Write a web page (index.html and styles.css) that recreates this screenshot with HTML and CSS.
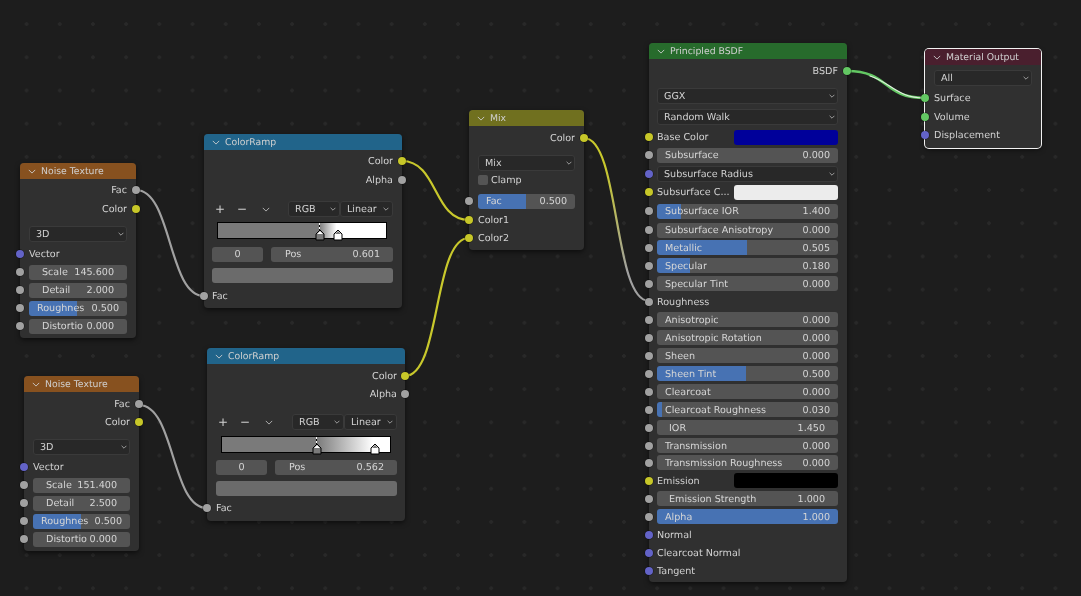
FILE: index.html
```html
<!DOCTYPE html>
<html lang="en">
<head>
<meta charset="utf-8">
<title>Shader nodes</title>
<link rel="stylesheet" href="styles.css">
</head>
<body>
<svg width="0" height="0" class="defs">
  <symbol id="chev" viewBox="0 0 10 6"><path d="M1 1l4 4 4-4" fill="none" stroke="currentColor" stroke-width="1.1"/></symbol>
</svg>
<main class="canvas">
  <svg class="wires" width="1081" height="596" viewBox="0 0 1081 596">
    <defs>
      <linearGradient id="yg" gradientUnits="userSpaceOnUse" x1="584" y1="138" x2="649" y2="301">
        <stop offset="0.2" stop-color="#c8c82c"/><stop offset="0.8" stop-color="#a1a1a1"/>
      </linearGradient>
    </defs>
    <path class="w w-gray" d="M136 190C172 190 168 296 204 296"/>
    <path class="w w-gray" d="M139 405C175 405 171 508 207 508"/>
    <path class="w w-yellow" d="M402 161C438 161 433 220 469 220"/>
    <path class="w w-yellow" d="M405 376C441 376 433 238 469 238"/>
    <path class="w w-mix" d="M584 138C620 138 613 301 649 301"/>
    <path class="w w-green" d="M847 71C890 71 882 98 925 98"/>
    <path class="w w-core" d="M870 76C890 82 897 98 925 98"/>
  </svg>

  <section class="node noise n1">
    <header class="head h-tex"><svg class="chev"><use href="#chev"/></svg><span>Noise Texture</span></header>
    <div class="row out first2"><span>Fac</span><i class="sock gray"></i></div>
    <div class="row out sp-1"><span>Color</span><i class="sock yellow"></i></div>
    <div class="row sp-7"><div class="drop"><span>3D</span><svg class="chev-s"><use href="#chev"/></svg></div></div>
    <div class="row sp-2"><i class="sock blue"></i><span>Vector</span></div>
    <div class="row"><i class="sock gray"></i><div class="field wide"><span>Scale</span><span>145.600</span></div></div>
    <div class="row"><i class="sock gray"></i><div class="field wide"><span>Detail</span><span>2.000</span></div></div>
    <div class="row"><i class="sock gray"></i><div class="field fill" style="--v:49%"><span>Roughnes</span><span>0.500</span></div></div>
    <div class="row"><i class="sock gray"></i><div class="field wide"><span>Distortio</span><span>0.000</span></div></div>
  </section>

  <section class="node noise n2">
    <header class="head h-tex"><svg class="chev"><use href="#chev"/></svg><span>Noise Texture</span></header>
    <div class="row out first"><span>Fac</span><i class="sock gray"></i></div>
    <div class="row out"><span>Color</span><i class="sock yellow"></i></div>
    <div class="row sp-7"><div class="drop"><span>3D</span><svg class="chev-s"><use href="#chev"/></svg></div></div>
    <div class="row sp-2"><i class="sock blue"></i><span>Vector</span></div>
    <div class="row"><i class="sock gray"></i><div class="field wide"><span>Scale</span><span>151.400</span></div></div>
    <div class="row"><i class="sock gray"></i><div class="field wide"><span>Detail</span><span>2.500</span></div></div>
    <div class="row"><i class="sock gray"></i><div class="field fill" style="--v:49%"><span>Roughnes</span><span>0.500</span></div></div>
    <div class="row"><i class="sock gray"></i><div class="field wide"><span>Distortio</span><span>0.000</span></div></div>
  </section>

  <section class="node ramp r1">
    <header class="head h-ramp"><svg class="chev"><use href="#chev"/></svg><span>ColorRamp</span></header>
    <div class="row out first2"><span>Color</span><i class="sock yellow"></i></div>
    <div class="row out sp-1"><span>Alpha</span><i class="sock gray"></i></div>
    <div class="row tools">
      <span class="tool">+</span><span class="tool">−</span><svg class="chev-t"><use href="#chev"/></svg>
      <div class="seg"><div class="drop"><span>RGB</span><svg class="chev-s"><use href="#chev"/></svg></div><div class="drop"><span>Linear</span><svg class="chev-s"><use href="#chev"/></svg></div></div>
    </div>
    <div class="rampbar g1">
      <i class="tick t1"></i>
      <svg class="stop s1" viewBox="0 0 10 12"><path d="M1 5l4-4 4 4v6H1z" fill="#7a7a7a" stroke="#000"/><path d="M2 5l3-3 3 3z" fill="#fff"/></svg>
      <svg class="stop s2" viewBox="0 0 10 12"><path d="M1 5l4-4 4 4v6H1z" fill="#fff" stroke="#000"/><path d="M2 5l3-3 3 3z" fill="#7a7a7a"/></svg>
    </div>
    <div class="row pos"><div class="field idx"><span>0</span></div><div class="field wide2"><span>Pos</span><span>0.601</span></div></div>
    <div class="row swatchrow"><div class="swatch"></div></div>
    <div class="row fac"><i class="sock gray"></i><span>Fac</span></div>
  </section>

  <section class="node ramp r2">
    <header class="head h-ramp"><svg class="chev"><use href="#chev"/></svg><span>ColorRamp</span></header>
    <div class="row out first"><span>Color</span><i class="sock yellow"></i></div>
    <div class="row out"><span>Alpha</span><i class="sock gray"></i></div>
    <div class="row tools">
      <span class="tool">+</span><span class="tool">−</span><svg class="chev-t"><use href="#chev"/></svg>
      <div class="seg"><div class="drop"><span>RGB</span><svg class="chev-s"><use href="#chev"/></svg></div><div class="drop"><span>Linear</span><svg class="chev-s"><use href="#chev"/></svg></div></div>
    </div>
    <div class="rampbar g2">
      <i class="tick t3"></i>
      <svg class="stop s3" viewBox="0 0 10 12"><path d="M1 5l4-4 4 4v6H1z" fill="#7a7a7a" stroke="#000"/><path d="M2 5l3-3 3 3z" fill="#fff"/></svg>
      <svg class="stop s4" viewBox="0 0 10 12"><path d="M1 5l4-4 4 4v6H1z" fill="#fff" stroke="#000"/><path d="M2 5l3-3 3 3z" fill="#7a7a7a"/></svg>
    </div>
    <div class="row pos"><div class="field idx"><span>0</span></div><div class="field wide2"><span>Pos</span><span>0.562</span></div></div>
    <div class="row swatchrow"><div class="swatch"></div></div>
    <div class="row fac"><i class="sock gray"></i><span>Fac</span></div>
  </section>

  <section class="node mix">
    <header class="head h-mix"><svg class="chev"><use href="#chev"/></svg><span>Mix</span></header>
    <div class="row out first"><span>Color</span><i class="sock yellow"></i></div>
    <div class="row sp-7"><div class="drop"><span>Mix</span><svg class="chev-s"><use href="#chev"/></svg></div></div>
    <div class="row up-1"><i class="check"></i><span>Clamp</span></div>
    <div class="row sp-3"><i class="sock gray"></i><div class="field fill" style="--v:49%"><span>Fac</span><span>0.500</span></div></div>
    <div class="row sp-1"><i class="sock yellow"></i><span>Color1</span></div>
    <div class="row"><i class="sock yellow"></i><span>Color2</span></div>
  </section>

  <section class="node bsdf">
    <header class="head h-bsdf"><svg class="chev"><use href="#chev"/></svg><span>Principled BSDF</span></header>
    <div class="row out first"><span>BSDF</span><i class="sock green"></i></div>
    <div class="row sp-7"><div class="drop"><span>GGX</span><svg class="chev-s"><use href="#chev"/></svg></div></div>
    <div class="row sp-3"><div class="drop"><span>Random Walk</span><svg class="chev-s"><use href="#chev"/></svg></div></div>
    <div class="row sp-2"><i class="sock yellow"></i><span class="lbl">Base Color</span><div class="color c-blue"></div></div>
    <div class="row"><i class="sock gray"></i><div class="field"><span>Subsurface</span><span>0.000</span></div></div>
    <div class="row sp-1"><i class="sock blue"></i><div class="drop"><span>Subsurface Radius</span><svg class="chev-s"><use href="#chev"/></svg></div></div>
    <div class="row"><i class="sock yellow"></i><span class="lbl">Subsurface C...</span><div class="color c-white"></div></div>
    <div class="row sp-1"><i class="sock gray"></i><div class="field fill" style="--v:13%"><span>Subsurface IOR</span><span>1.400</span></div></div>
    <div class="row sp-1"><i class="sock gray"></i><div class="field"><span>Subsurface Anisotropy</span><span>0.000</span></div></div>
    <div class="row up-h"><i class="sock gray"></i><div class="field fill" style="--v:50%"><span>Metallic</span><span>0.505</span></div></div>
    <div class="row"><i class="sock gray"></i><div class="field fill" style="--v:18%"><span>Specular</span><span>0.180</span></div></div>
    <div class="row"><i class="sock gray"></i><div class="field"><span>Specular Tint</span><span>0.000</span></div></div>
    <div class="row"><i class="sock gray"></i><span>Roughness</span></div>
    <div class="row"><i class="sock gray"></i><div class="field"><span>Anisotropic</span><span>0.000</span></div></div>
    <div class="row"><i class="sock gray"></i><div class="field"><span>Anisotropic Rotation</span><span>0.000</span></div></div>
    <div class="row"><i class="sock gray"></i><div class="field"><span>Sheen</span><span>0.000</span></div></div>
    <div class="row"><i class="sock gray"></i><div class="field fill" style="--v:49%"><span>Sheen Tint</span><span>0.500</span></div></div>
    <div class="row"><i class="sock gray"></i><div class="field"><span>Clearcoat</span><span>0.000</span></div></div>
    <div class="row"><i class="sock gray"></i><div class="field fill" style="--v:3%"><span>Clearcoat Roughness</span><span>0.030</span></div></div>
    <div class="row"><i class="sock gray"></i><div class="field inset"><span>IOR</span><span>1.450</span></div></div>
    <div class="row"><i class="sock gray"></i><div class="field"><span>Transmission</span><span>0.000</span></div></div>
    <div class="row up-1"><i class="sock gray"></i><div class="field"><span>Transmission Roughness</span><span>0.000</span></div></div>
    <div class="row"><i class="sock yellow"></i><span class="lbl">Emission</span><div class="color c-black"></div></div>
    <div class="row"><i class="sock gray"></i><div class="field inset"><span>Emission Strength</span><span>1.000</span></div></div>
    <div class="row"><i class="sock gray"></i><div class="field fill" style="--v:100%"><span>Alpha</span><span>1.000</span></div></div>
    <div class="row"><i class="sock blue"></i><span>Normal</span></div>
    <div class="row"><i class="sock blue"></i><span>Clearcoat Normal</span></div>
    <div class="row"><i class="sock blue"></i><span>Tangent</span></div>
  </section>

  <section class="node output">
    <header class="head h-out"><svg class="chev"><use href="#chev"/></svg><span>Material Output</span></header>
    <div class="row sp-4"><div class="drop"><span>All</span><svg class="chev-s"><use href="#chev"/></svg></div></div>
    <div class="row sp-2"><i class="sock green"></i><span>Surface</span></div>
    <div class="row sp-1"><i class="sock green"></i><span>Volume</span></div>
    <div class="row"><i class="sock blue"></i><span>Displacement</span></div>
  </section>
</main>
</body>
</html>
```
FILE: styles.css
```css
* { box-sizing: border-box; }
html, body { margin: 0; padding: 0; overflow: hidden; }
.defs { position: absolute; }
.canvas {
  position: relative;
  width: 1081px;
  height: 596px;
  overflow: hidden;
  background-color: #1d1d1d;
  background-image: radial-gradient(circle, #292929 0, #282828 1.6px, transparent 2.1px);
  background-size: 33.2px 33.2px;
  background-position: 10px 7.5px;
  font: 9.6px "DejaVu Sans", sans-serif;
  text-rendering: geometricPrecision;
  color: #d2d2d2;
  filter: blur(.3px);
}
.canvas span { padding-top: 1.6px; }
.wires { position: absolute; left: 0; top: 0; }
.w { fill: none; stroke-width: 2.2; stroke-linecap: round; }
.w-gray { stroke: #a1a1a1; }
.w-yellow { stroke: #c8c82c; }
.w-mix { stroke: url(#yg); }
.w-green { stroke: #63c763; stroke-width: 2.6; }
.w-core { stroke: #dfeedd; stroke-width: 1.2; }

.node {
  position: absolute;
  background: #303030;
  border-radius: 4px;
  box-shadow: 0 2px 5px rgba(0, 0, 0, .55);
  --px: 9px;
  --pr: 9px;
}
.n1 { left: 20px; top: 163px; width: 116px; height: 175px; }
.n2 { left: 24px; top: 376px; width: 115px; height: 175px; }
.r1 { left: 204px; top: 134px; width: 198px; height: 174px; --px: 8px; --pr: 9px; }
.r2 { left: 207px; top: 348px; width: 198px; height: 173px; --px: 9px; --pr: 8px; }
.mix { left: 469px; top: 110px; width: 115px; height: 140px; }
.bsdf { left: 649px; top: 43px; width: 198px; height: 539px; --px: 8px; --pr: 9px; }
.output { left: 925px; top: 49px; width: 116px; height: 99px; box-shadow: 0 0 0 1px #f2f2f2, 0 2px 5px rgba(0,0,0,.5); }

.head {
  display: flex;
  align-items: center;
  gap: 5px;
  height: 16px;
  padding-left: 8px;
  border-radius: 4px 4px 0 0;
  font-size: 9.3px;
  color: #d0d0d0;
}
.h-tex { background: #87511f; }
.h-ramp { background: #21648a; }
.h-mix { background: #70701f; }
.h-bsdf { background: #276b2c; }
.h-out { background: #4a1f2e; }
.chev { width: 8px; height: 5px; color: #d0d0d0; }
.chev-s { width: 6px; height: 4px; color: #d8d8d8; flex: none; }
.chev-t { width: 8px; height: 5px; color: #bdbdbd; margin-left: 3px; }

.row {
  position: relative;
  display: flex;
  align-items: center;
  height: 18px;
  padding: 0 var(--pr) 0 var(--px);
  white-space: nowrap;
}
.first { margin-top: 3px; }
.first2 { margin-top: 2px; }
.out { justify-content: flex-end; }
.sp-1 { margin-top: 1px; }
.sp-2 { margin-top: 2px; }
.sp-3 { margin-top: 3px; }
.sp-4 { margin-top: 4px; }
.sp-7 { margin-top: 7px; }
.up-1 { margin-top: -1px; }
.up-h { margin-top: -.5px; }

.sock {
  position: absolute;
  left: -4px;
  top: 5px;
  width: 8px;
  height: 8px;
  border-radius: 50%;
  box-shadow: 0 0 0 .5px rgba(0, 0, 0, .6);
}
.out .sock { left: auto; right: -4px; }
.gray { background: #a1a1a1; }
.yellow { background: #c7c729; }
.blue { background: #6363c7; }
.green { background: #63c763; }

.field {
  flex: 1;
  height: 15px;
  display: flex;
  align-items: center;
  justify-content: space-between;
  padding: 0 8px;
  border-radius: 3px;
  background: #545454;
  color: #d6d6d6;
  overflow: hidden;
}
.wide { padding: 0 13px; }
.inset { padding: 0 13px 0 12px; }
.fill { background: linear-gradient(90deg, #4772b3 var(--v), #545454 var(--v)); }
.drop {
  flex: 1;
  min-width: 0;
  height: 16px;
  display: flex;
  align-items: center;
  justify-content: space-between;
  padding: 0 2px 0 6px;
  background: #282828;
  border: 1px solid #3a3a3a;
  border-radius: 3px;
  color: #d2d2d2;
}
.lbl { width: 77px; overflow: hidden; }
.color { flex: 1; height: 15px; border-radius: 3px; }
.c-blue { background: #00009a; }
.c-white { background: #ececec; }
.c-black { background: #000; }
.check {
  width: 10px;
  height: 10px;
  margin-right: 3px;
  background: #545454;
  border-radius: 2px;
}

.tools { margin-top: 11px; padding-left: 11px; }
.r2 .tools { margin-top: 10px; }
.canvas .tool { width: 22px; padding-top: 0; font-size: 12px; line-height: 14px; color: #d0d0d0; }
.seg { display: flex; margin-left: auto; width: 105px; }
.seg .drop { flex: none; width: 52px; padding: 0 3px 0 6px; }
.seg .drop + .drop { width: 53px; }
.rampbar {
  position: relative;
  height: 17px;
  margin: 4px 15px 0 13px;
  border: 1px solid #000;
  border-bottom-width: 1.5px;
}
.r2 .rampbar { margin: 5px 14px 0 14px; }
.g1 { background: linear-gradient(90deg, #7a7a7a 60.1%, #fff 70.5%); }
.g2 { background: linear-gradient(90deg, #7a7a7a 56.2%, #fff 90%); }
.tick { position: absolute; top: 0; width: 1px; height: 8px; background: repeating-linear-gradient(#fff 0 2px, #000 2px 4px); }
.t1 { left: 101px; }
.t3 { left: 94px; }
.stop { position: absolute; top: 6px; width: 10px; height: 12px; }
.s1 { left: 97px; }
.s2 { left: 115px; }
.s3 { left: 90px; }
.s4 { left: 148px; }
.pos { margin-top: 6px; gap: 8px; }
.r2 .pos { margin-top: 5px; }
.idx { flex: none; width: 51px; justify-content: center; }
.wide2 { padding: 0 13px 0 14px; }
.swatchrow { margin-top: 3px; }
.swatch { flex: 1; height: 15px; background: #6b6b6b; border-radius: 3px; }
.fac { margin-top: 3px; }
.r2 .fac { margin-top: 2px; }
```
